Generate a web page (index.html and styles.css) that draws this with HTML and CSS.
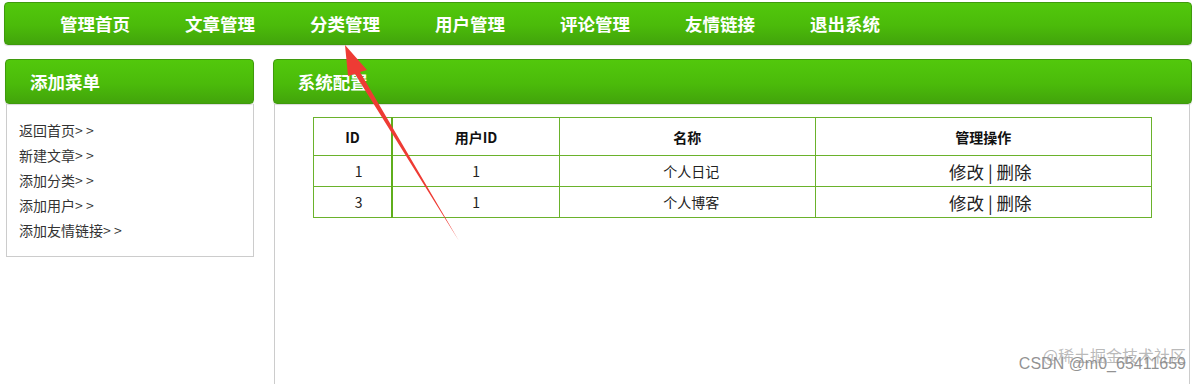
FILE: index.html
```html
<!DOCTYPE html>
<html lang="zh-CN">
<head>
<meta charset="utf-8">
<title>后台管理</title>
<link rel="stylesheet" href="styles.css">
</head>
<body>
<div class="page">
  <nav class="topnav">
    <a>管理首页</a>
    <a>文章管理</a>
    <a>分类管理</a>
    <a>用户管理</a>
    <a>评论管理</a>
    <a>友情链接</a>
    <a>退出系统</a>
  </nav>
  <div class="main">
    <aside class="side">
      <div class="bar">添加菜单</div>
      <ul class="menu">
        <li>返回首页&gt; &gt;</li>
        <li>新建文章&gt; &gt;</li>
        <li>添加分类&gt; &gt;</li>
        <li>添加用户&gt; &gt;</li>
        <li>添加友情链接&gt; &gt;</li>
      </ul>
    </aside>
    <section class="content">
      <div class="bar">系统配置</div>
      <div class="body">
        <table class="grid">
          <thead>
            <tr><th class="c1">ID</th><th class="c2">用户ID</th><th class="c3">名称</th><th class="c4">管理操作</th></tr>
          </thead>
          <tbody>
            <tr><td class="c1">1</td><td class="c2">1</td><td class="c3">个人日记</td><td class="c4 ops">修改 | 删除</td></tr>
            <tr><td class="c1">3</td><td class="c2">1</td><td class="c3">个人博客</td><td class="c4 ops">修改 | 删除</td></tr>
          </tbody>
        </table>
      </div>
    </section>
  </div>
</div>
<svg class="arrow" width="1200" height="384" viewBox="0 0 1200 384">
  <polygon points="345,45 367,70 360,72 459,241 355,74 348,76" fill="#ee3b34"/>
</svg>
<div class="wm">
  <span class="wm1">CSDN @m0_65411659</span>
  <span class="wm2">@稀土掘金技术社区</span>
</div>
</body>
</html>
```
FILE: styles.css
```css
* { box-sizing: border-box; }
html, body { margin: 0; padding: 0; background: #fff; }
body {
  font-family: "Noto Sans CJK SC", "Microsoft YaHei", sans-serif;
  width: 1200px;
  height: 384px;
  overflow: hidden;
  position: relative;
}
.page { padding: 2px 8px 0 4px; }
.topnav {
  display: flex;
  gap: 55px;
  height: 43px;
  align-items: center;
  padding-left: 55px;
  border-radius: 4px;
  background: linear-gradient(#52c80c, #4bbb0a 55%, #42a40b);
  border: 1px solid #3f9a0c;
  box-shadow: 0 1px 1px rgba(0,0,0,0.15);
}
.topnav a {
  color: #fff;
  font-weight: bold;
  font-size: 17.5px;
  line-height: 20px;
  width: 70px;
  white-space: nowrap;
}
.main {
  display: flex;
  gap: 19px;
  margin-top: 14px;
  align-items: flex-start;
}
.bar {
  height: 45px;
  border-radius: 4px;
  background: linear-gradient(#52c80c, #4bbb0a 55%, #42a40b);
  border: 1px solid #3f9a0c;
  box-shadow: 0 1px 1px rgba(0,0,0,0.15);
  color: #fff;
  font-weight: bold;
  font-size: 17.5px;
  display: flex;
  align-items: center;
  padding-left: 24px;
}
.side { width: 249px; margin-left: 1px; }
.menu {
  list-style: none;
  margin: 0 0 0 1px;
  padding: 14px 0 13px 12px;
  border: 1px solid #cccccc;
  border-top: none;
  font-size: 14px;
  line-height: 25px;
  color: #333;
}
.content { width: 920px; }
.body {
  margin-left: 1px;
  margin-right: 2px;
  height: 290px;
  border-left: 1px solid #cccccc;
  border-right: 1px solid #cccccc;
  padding-top: 13px;
}
.grid {
  margin: 0 0 0 38px;
  width: 839px;
  border-collapse: collapse;
  font-size: 14px;
  color: #222;
}
.grid th, .grid td {
  border: 1px solid #6ab22b;
  text-align: center;
  padding: 0;
}
.grid th { height: 38px; font-weight: bold; color: #111; }
.grid td { height: 31px; }
.grid .c1 { width: 79px; border-right: 2px solid #5fae1c; padding-left: 12px; }
.grid th.c1 { padding-left: 0; }
.grid .c2 { width: 167px; }
.grid .c3 { width: 256px; }
.grid td.c3 { padding-left: 8px; }
.grid .ops { font-size: 17.5px; padding-left: 14px; }
.arrow { position: absolute; left: 0; top: 0; pointer-events: none; }
.wm {
  position: absolute;
  right: 14px;
  bottom: 11px;
  font-family: "Liberation Sans", "Noto Sans CJK SC", sans-serif;
  color: rgba(110,110,110,0.75);
  font-size: 16px;
  width: 210px;
  height: 36px;
}
.wm1 { position: absolute; right: 0; bottom: 0; white-space: nowrap; }
.wm2 { position: absolute; right: 0; bottom: 6px; white-space: nowrap; font-family: "Noto Sans CJK SC", sans-serif; font-size: 16px; color: rgba(140,140,140,0.6); }
```
